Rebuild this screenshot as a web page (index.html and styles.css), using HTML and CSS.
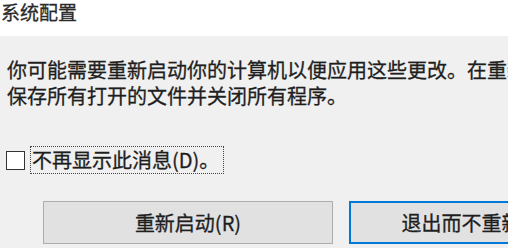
FILE: index.html
```html
<!DOCTYPE html>
<html lang="zh-CN">
<head>
<meta charset="utf-8">
<title>系统配置</title>
<link rel="stylesheet" href="styles.css">
</head>
<body>
<div class="dialog">
  <div class="titlebar">系统配置</div>
  <div class="content">
    <div class="message">
      <div class="line">你可能需要重新启动你的计算机以便应用这些更改。在重新启动之前，</div>
      <div class="line">保存所有打开的文件并关闭所有程序。</div>
    </div>
    <div class="check-row">
      <span class="checkbox"></span>
      <span class="check-label">不再显示此消息(D)。</span>
    </div>
    <div class="buttons">
      <div class="btn">重新启动(R)</div>
      <div class="btn btn-default">退出而不重新启动(X)</div>
    </div>
  </div>
</div>
</body>
</html>
```
FILE: styles.css
```css
html, body {
  margin: 0;
  padding: 0;
}
body {
  width: 508px;
  height: 248px;
  overflow: hidden;
  font-family: "Noto Sans CJK SC", "Noto Sans", sans-serif;
  color: #1e1e1e;
  background: #f0f0f0;
  -webkit-text-stroke: 0.3px currentColor;
}
.dialog {
  width: 508px;
  height: 248px;
  display: flex;
  flex-direction: column;
}
.titlebar {
  height: 36px;
  flex-shrink: 0;
  background: #ffffff;
  font-size: 19px;
  line-height: 24px;
  padding-left: 1px;
  color: #2a2a2a;
  white-space: nowrap;
}
.content {
  flex: 1;
  background: #f0f0f0;
  display: flex;
  flex-direction: column;
}
.message {
  padding: 21px 0 0 7px;
  font-size: 20px;
  line-height: 26px;
  white-space: nowrap;
}
.check-row {
  display: flex;
  align-items: center;
  margin: 37px 0 0 6px;
  height: 28px;
}
.checkbox {
  width: 17px;
  height: 17px;
  border: 1.5px solid #333333;
  background: #ffffff;
  flex-shrink: 0;
}
.check-label {
  margin-left: 5px;
  border: 1px dotted #444444;
  height: 26px;
  line-height: 26px;
  font-size: 20px;
  padding: 0 4px 0 1px;
  white-space: nowrap;
}
.buttons {
  display: flex;
  gap: 16px;
  margin: 27px 0 0 43px;
}
.btn {
  flex-shrink: 0;
  width: 288px;
  height: 41px;
  border: 1px solid #adadad;
  background: #e1e1e1;
  font-size: 20px;
  line-height: 41px;
  text-align: center;
  white-space: nowrap;
  color: #1e1e1e;
}
.btn-default {
  width: 286px;
  height: 39px;
  line-height: 39px;
  border: 2px solid #0078d7;
}
```
